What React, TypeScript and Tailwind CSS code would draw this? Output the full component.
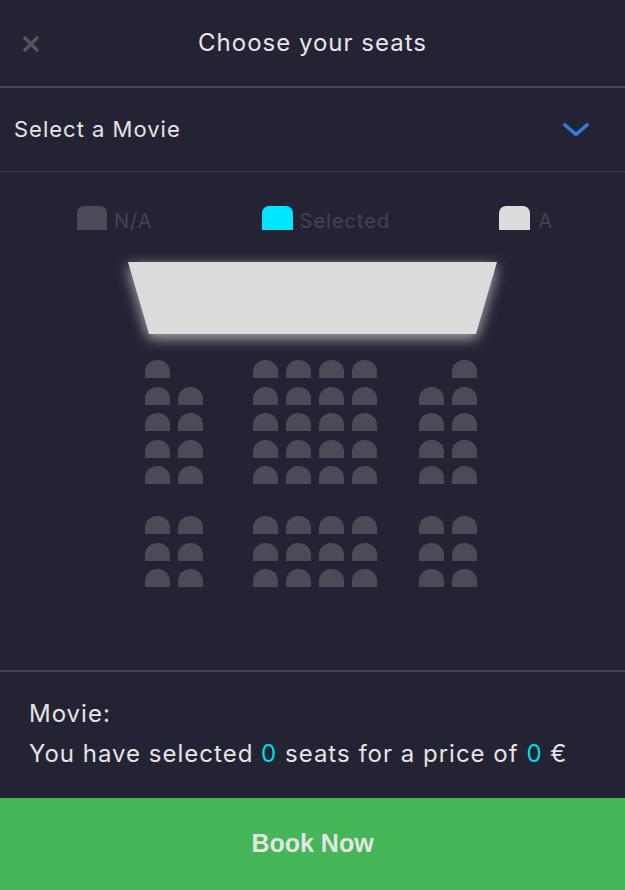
import React from "react";

const font = { fontFamily: "Inter, 'Noto Sans', sans-serif" };

function Seat({ hidden }: { hidden?: boolean }) {
  return (
    <div
      className={
        "w-[25px] h-[18px] rounded-t-[12px] " +
        (hidden ? "bg-transparent" : "bg-[#4b4a57]")
      }
    />
  );
}

function Block({
  cols,
  firstRow,
}: {
  cols: number;
  firstRow: boolean[];
}) {
  const rows = [0, 1, 2, 3, 4];
  const rows2 = [0, 1, 2];
  return (
    <div className="flex flex-col">
      <div className="flex flex-col gap-[8.5px]">
        {rows.map((r) => (
          <div key={r} className="flex gap-[8px]">
            {Array.from({ length: cols }).map((_, c) => (
              <Seat key={c} hidden={r === 0 && !firstRow[c]} />
            ))}
          </div>
        ))}
      </div>
      <div className="flex flex-col gap-[8.5px] mt-[32px]">
        {rows2.map((r) => (
          <div key={r} className="flex gap-[8px]">
            {Array.from({ length: cols }).map((_, c) => (
              <Seat key={c} />
            ))}
          </div>
        ))}
      </div>
    </div>
  );
}

export default function App() {
  return (
    <div
      className="w-[625px] h-[890px] bg-[#242333] flex flex-col overflow-hidden"
      style={font}
    >
      {/* Header */}
      <div className="h-[86px] grid grid-cols-[1fr_auto_1fr] items-center">
        <div className="pl-[23px] pt-[1px] flex items-center">
          <svg width="16" height="16" viewBox="0 0 16 16">
            <path
              d="M2 2 L14 14 M14 2 L2 14"
              stroke="#55555b"
              strokeWidth="3.6"
              strokeLinecap="round"
            />
          </svg>
        </div>
        <div className="text-[24px] text-[#e6e6e8] tracking-[1px]">
          Choose your seats
        </div>
        <div />
      </div>
      <div className="h-[2px] bg-[#4a4a54]" />

      {/* Select */}
      <div className="h-[83px] flex items-center justify-between pl-[14px] pr-[36px]">
        <div className="text-[22px] text-[#e4e4e6] tracking-[1px]">
          Select a Movie
        </div>
        <svg width="26" height="14" viewBox="0 0 26 14" className="mt-[1px]">
          <path
            d="M2 2 L13 11.5 L24 2"
            fill="none"
            stroke="#2f7de8"
            strokeWidth="3.6"
            strokeLinecap="round"
            strokeLinejoin="round"
          />
        </svg>
      </div>
      <div className="h-px bg-[#3a3947]" />

      {/* Seats area */}
      <div className="flex-1 flex flex-col">
        {/* Legend */}
        <div className="flex justify-between items-start pl-[77px] pr-[73px] pt-[34px] h-[90px]">
          <div className="flex items-start gap-[7px]">
            <div className="w-[30px] h-[24px] rounded-t-[7px] bg-[#4b4a57]" />
            <span className="text-[20px] leading-[24px] pt-[3px] tracking-[1px] text-[#44434f]">
              N/A
            </span>
          </div>
          <div className="flex items-start gap-[7px]">
            <div className="w-[31px] h-[24px] rounded-t-[7px] bg-[#00e6ff]" />
            <span className="text-[20px] leading-[24px] pt-[3px] tracking-[1px] text-[#44434f]">
              Selected
            </span>
          </div>
          <div className="flex items-start gap-[8px]">
            <div className="w-[31px] h-[24px] rounded-t-[7px] bg-[#dcdcdc]" />
            <span className="text-[20px] leading-[24px] pt-[3px] text-[#44434f]">
              A
            </span>
          </div>
        </div>

        {/* Screen */}
        <div className="flex justify-center drop-shadow-[0_4px_7px_rgba(255,255,255,0.65)]">
          <div className="w-[369px] h-[72px] bg-[#dcdcdc] [clip-path:polygon(0_0,100%_0,94.3%_100%,5.7%_100%)]" />
        </div>

        {/* Seats */}
        <div className="flex pl-[145px] mt-[26px]">
          <Block cols={2} firstRow={[true, false]} />
          <div className="ml-[50px]">
            <Block cols={4} firstRow={[true, true, true, true]} />
          </div>
          <div className="ml-[42px]">
            <Block cols={2} firstRow={[false, true]} />
          </div>
        </div>
      </div>

      {/* Info */}
      <div className="h-[2px] bg-[#45444f]" />
      <div className="h-[126px] flex flex-col justify-center pl-[29px] pb-[2px] text-[24px] leading-[40px] tracking-[1px] text-[#e4e4e6]">
        <div>Movie:</div>
        <div>
          You have selected <span className="text-[#00dbe8]">0</span> seats for a
          price of <span className="text-[#00dbe8]">0</span> €
        </div>
      </div>

      {/* Button */}
      <div
        className="h-[92px] bg-[#44b658] flex items-center justify-center text-[25px] font-bold text-[#e2e6e0]"
        style={{ fontFamily: "'Liberation Sans', Arial, sans-serif" }}
      >
        Book Now
      </div>
    </div>
  );
}
